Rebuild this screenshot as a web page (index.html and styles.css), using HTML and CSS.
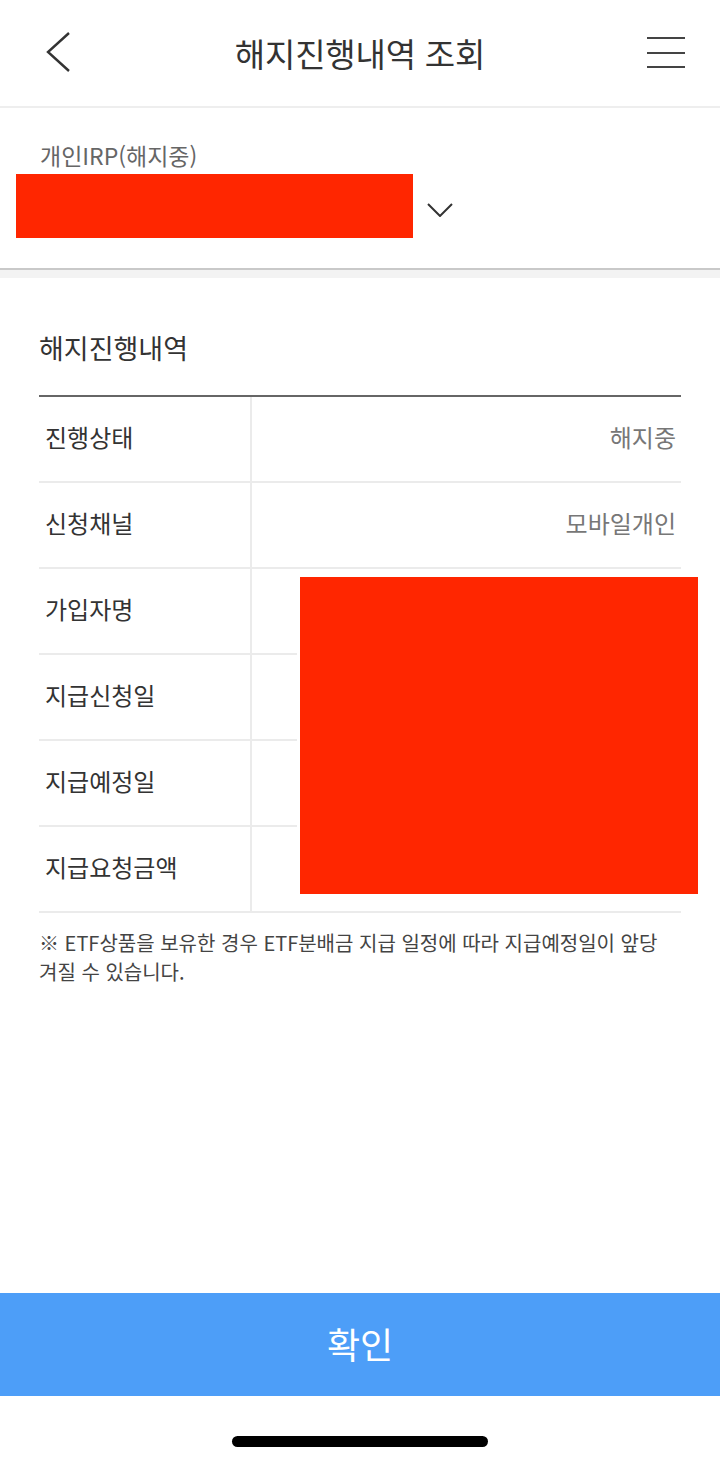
FILE: index.html
```html
<!DOCTYPE html>
<html lang="ko">
<head>
<meta charset="utf-8">
<title>해지진행내역 조회</title>
<link rel="stylesheet" href="styles.css">
</head>
<body>
<div class="page">
  <header class="topbar">
    <div class="topbar-left">
      <svg class="icon-back" width="30" height="44" viewBox="0 0 30 44">
        <polyline points="24,3 3,22 24,41" fill="none" stroke="#333" stroke-width="2.4" stroke-linejoin="miter"/>
      </svg>
    </div>
    <h1 class="title">해지진행내역 조회</h1>
    <div class="topbar-right">
      <svg class="icon-menu" width="40" height="34" viewBox="0 0 40 34">
        <line x1="1" y1="3" x2="39" y2="3" stroke="#444" stroke-width="2"/>
        <line x1="1" y1="18" x2="39" y2="18" stroke="#444" stroke-width="2"/>
        <line x1="1" y1="32" x2="39" y2="32" stroke="#444" stroke-width="2"/>
      </svg>
    </div>
  </header>

  <section class="account">
    <div class="account-label">개인IRP(해지중)</div>
    <div class="account-select">
      <div class="redact redact-account"></div>
      <svg class="icon-down" width="26" height="14" viewBox="0 0 26 14">
        <polyline points="1,1 13,13 25,1" fill="none" stroke="#333" stroke-width="2"/>
      </svg>
    </div>
  </section>
  <div class="band"></div>

  <main class="details">
    <h2 class="section-title">해지진행내역</h2>
    <div class="table">
      <div class="row"><div class="cell-label">진행상태</div><div class="cell-value">해지중</div></div>
      <div class="row"><div class="cell-label">신청채널</div><div class="cell-value">모바일개인</div></div>
      <div class="row"><div class="cell-label">가입자명</div><div class="cell-value"></div></div>
      <div class="row"><div class="cell-label">지급신청일</div><div class="cell-value"></div></div>
      <div class="row"><div class="cell-label">지급예정일</div><div class="cell-value"></div></div>
      <div class="row"><div class="cell-label">지급요청금액</div><div class="cell-value"></div></div>
      <div class="redact redact-table"></div>
    </div>
    <p class="note">※ ETF상품을 보유한 경우 ETF분배금 지급 일정에 따라 지급예정일이 앞당<br>겨질 수 있습니다.</p>
  </main>

  <button class="confirm" type="button">확인</button>
  <div class="home-area"><div class="home-bar"></div></div>
</div>
</body>
</html>
```

FILE: styles.css
```css
* { box-sizing: border-box; }
html, body { margin: 0; padding: 0; background: #fff; }
body {
  font-family: "Noto Sans CJK KR", "Noto Sans", sans-serif;
  color: #333;
}
.page {
  width: 720px;
  height: 1462px;
  display: flex;
  flex-direction: column;
  overflow: hidden;
}
.topbar {
  height: 108px;
  border-bottom: 2px solid #eeeeee;
  display: grid;
  grid-template-columns: 1fr auto 1fr;
  align-items: center;
}
.topbar-left { padding-left: 45px; display: flex; align-items: center; padding-bottom: 2px; }
.topbar-right { display: flex; justify-content: flex-end; padding-right: 34px; padding-bottom: 2px; }
.title {
  margin: 0;
  font-size: 33px;
  font-weight: 400;
  color: #333;
  letter-spacing: -0.2px;
  line-height: 42px;
}
.account {
  padding: 32px 0 30px 16px;
  border-bottom: 2px solid #c9c9c9;
}
.account-label {
  padding-left: 24px;
  font-size: 23px;
  line-height: 30px;
  color: #666;
  letter-spacing: 0;
}
.account-select {
  margin-top: 4px;
  display: flex;
  align-items: center;
}
.redact { background: #ff2600; }
.redact-account { width: 397px; height: 64px; }
.icon-down { margin-left: 14px; margin-top: 8px; }
.band { height: 8px; background: #f3f3f3; }
.details {
  flex: 1;
  padding: 0 39px;
}
.section-title {
  margin: 53px 0 0 0;
  font-size: 27px;
  font-weight: 400;
  line-height: 34px;
  color: #333;
  letter-spacing: 0;
}
.table {
  position: relative;
  margin-top: 30px;
  border-top: 2px solid #666;
}
.row {
  display: grid;
  grid-template-columns: 213px 1fr;
  height: 86px;
  border-bottom: 2px solid #ebebeb;
}
.cell-label {
  padding-left: 6px;
  padding-bottom: 6px;
  display: flex;
  align-items: center;
  font-size: 24px;
  color: #333;
  letter-spacing: 0;
  border-right: 2px solid #ebebeb;
}
.cell-value {
  display: flex;
  align-items: center;
  justify-content: flex-end;
  padding-right: 5px;
  padding-bottom: 6px;
  font-size: 24px;
  color: #777;
  letter-spacing: 0;
}
.redact-table {
  position: absolute;
  left: 261px;
  top: 180px;
  width: 398px;
  height: 317px;
  box-shadow: 0 0 0 3px #fff;
}
.note {
  margin: 15px 0 0 0;
  font-size: 20px;
  line-height: 29px;
  color: #444;
  letter-spacing: 0;
  white-space: nowrap;
}
.confirm {
  display: block;
  width: 720px;
  height: 103px;
  margin: 0;
  border: 0;
  padding: 0 0 4px 0;
  background: #4d9ef8;
  color: #fff;
  font-family: "Noto Sans CJK KR", "Noto Sans", sans-serif;
  font-size: 36px;
  font-weight: 400;
}
.home-area {
  height: 66px;
  display: flex;
  justify-content: center;
  padding-top: 40px;
}
.home-bar {
  width: 256px;
  height: 11px;
  border-radius: 6px;
  background: #000;
}
```
